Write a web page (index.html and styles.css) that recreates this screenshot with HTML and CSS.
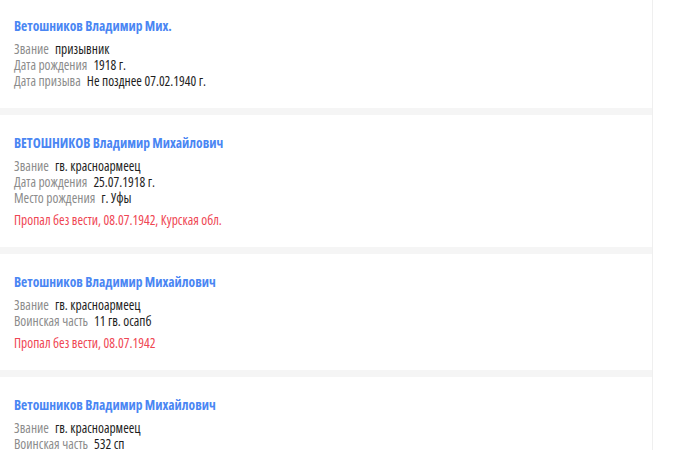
FILE: index.html
```html
<!DOCTYPE html>
<html lang="ru">
<head>
<meta charset="utf-8">
<title>Результаты поиска</title>
<link rel="stylesheet" href="styles.css">
</head>
<body>
<div class="page">
  <div class="results">
    <div class="card">
      <a class="name">Ветошников Владимир Мих.</a>
      <div class="fields">
        <div class="row"><span class="label">Звание</span><span class="value">призывник</span></div>
        <div class="row"><span class="label">Дата рождения</span><span class="value">1918 г.</span></div>
        <div class="row"><span class="label">Дата призыва</span><span class="value">Не позднее 07.02.1940 г.</span></div>
      </div>
    </div>
    <div class="card">
      <a class="name">ВЕТОШНИКОВ Владимир Михайлович</a>
      <div class="fields">
        <div class="row"><span class="label">Звание</span><span class="value">гв. красноармеец</span></div>
        <div class="row"><span class="label">Дата рождения</span><span class="value">25.07.1918 г.</span></div>
        <div class="row"><span class="label">Место рождения</span><span class="value">г. Уфы</span></div>
      </div>
      <div class="fate">Пропал без вести, 08.07.1942, Курская обл.</div>
    </div>
    <div class="card">
      <a class="name">Ветошников Владимир Михайлович</a>
      <div class="fields">
        <div class="row"><span class="label">Звание</span><span class="value">гв. красноармеец</span></div>
        <div class="row"><span class="label">Воинская часть</span><span class="value">11 гв. осапб</span></div>
      </div>
      <div class="fate">Пропал без вести, 08.07.1942</div>
    </div>
    <div class="card">
      <a class="name">Ветошников Владимир Михайлович</a>
      <div class="fields">
        <div class="row"><span class="label">Звание</span><span class="value">гв. красноармеец</span></div>
        <div class="row"><span class="label">Воинская часть</span><span class="value">532 сп</span></div>
      </div>
    </div>
  </div>
</div>
</body>
</html>
```

FILE: styles.css
```css
html, body {
  margin: 0;
  padding: 0;
  background: #ffffff;
}

body {
  font-family: "Open Sans", "Roboto", sans-serif;
  font-stretch: condensed;
  font-size: 13.5px;
  color: #222222;
  overflow: hidden;
}

.page {
  width: 652px;
  height: 450px;
  border-right: 1px solid #efefef;
  overflow: hidden;
}

.results {
  margin-top: -2px;
  display: flex;
  flex-direction: column;
  gap: 7px;
  background: #f5f5f5;
}

.card {
  background: #ffffff;
  padding: 20px 14px 19px;
}

.name {
  display: block;
  font-size: 13.5px;
  font-weight: 700;
  line-height: 16px;
  color: #4a86f3;
  text-decoration: none;
}

.fields {
  margin-top: 7px;
}

.row {
  display: flex;
  gap: 6px;
  line-height: 16px;
}

.label {
  color: #8c8c8c;
}

.value {
  color: #1e1e1e;
}

.fate {
  margin-top: 6px;
  line-height: 16px;
  color: #ef4653;
}
```
